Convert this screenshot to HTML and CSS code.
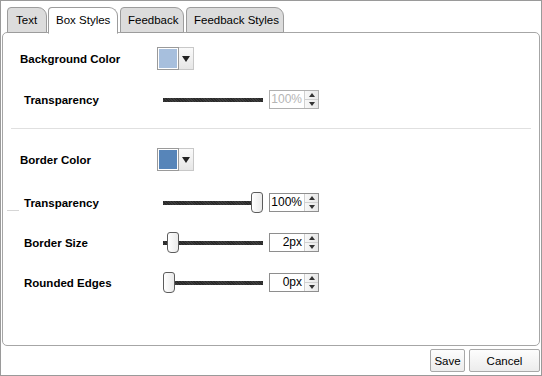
FILE: index.html
```html
<!DOCTYPE html>
<html>
<head>
<meta charset="utf-8">
<link rel="stylesheet" href="styles.css">
</head>
<body>
<div class="window">
  <div class="tabs">
    <div class="tab t-text">Text</div>
    <div class="tab t-box active">Box Styles</div>
    <div class="tab t-fb">Feedback</div>
    <div class="tab t-fbs">Feedback Styles</div>
  </div>
  <div class="panel">
    <div class="row r1">
      <div class="label">Background Color</div>
      <div class="swatch"><span class="fill light"></span><span class="drop"><span class="tri"></span></span></div>
    </div>
    <div class="row r2">
      <div class="label sub">Transparency</div>
      <div class="slider"></div>
      <div class="spin disabled"><span class="val">100%</span><span class="btns"><span class="up"></span><span class="down"></span></span></div>
    </div>
    <div class="sep"></div>
    <div class="row r3">
      <div class="label">Border Color</div>
      <div class="swatch"><span class="fill dark"></span><span class="drop"><span class="tri"></span></span></div>
    </div>
    <div class="row r4">
      <div class="label sub tick">Transparency</div>
      <div class="slider"><span class="thumb" style="left:88px"></span></div>
      <div class="spin"><span class="val">100%</span><span class="btns"><span class="up"></span><span class="down"></span></span></div>
    </div>
    <div class="row r5">
      <div class="label sub">Border Size</div>
      <div class="slider"><span class="thumb" style="left:4px"></span></div>
      <div class="spin"><span class="val">2px</span><span class="btns"><span class="up"></span><span class="down"></span></span></div>
    </div>
    <div class="row r6">
      <div class="label sub">Rounded Edges</div>
      <div class="slider"><span class="thumb" style="left:0px"></span></div>
      <div class="spin"><span class="val">0px</span><span class="btns"><span class="up"></span><span class="down"></span></span></div>
    </div>
  </div>
  <div class="footer">
    <button class="btn save">Save</button>
    <button class="btn cancel">Cancel</button>
  </div>
</div>
</body>
</html>
```

FILE: styles.css
```css
html, body { margin: 0; padding: 0; background: #fff; }
body { font-family: "Liberation Sans", Arial, sans-serif; font-size: 11px; color: #000; }
.window {
  width: 542px; height: 376px; box-sizing: border-box;
  border: 1px solid #9a9a9a; background: #fff;
  display: flex; flex-direction: column;
}
.tabs {
  display: flex; height: 25px; margin-top: 6px; padding-left: 6px; gap: 1px;
  position: relative; z-index: 2;
}
.tab {
  height: 26px; box-sizing: border-box;
  border: 1px solid #9c9c9c;
  border-radius: 4px 9px 0 0;
  background: #dcdcdc;
  padding: 6px 0 0 8px;
  font-size: 11.5px; line-height: 13px; color: #000;
}
.tab.t-text { width: 40px; }
.tab.t-box { width: 70px; padding-left: 7px; }
.tab.t-fb { width: 64px; padding-left: 7px; margin-left: 1px; }
.tab.t-fbs { width: 98px; padding-left: 7px; margin-left: 1px; }
.tab.active { background: #fff; border-bottom-color: #fff; height: 27px; }
.panel {
  margin: 0 1px; height: 314px; box-sizing: border-box;
  border: 1px solid #a6a6a6; border-radius: 5px;
  padding-top: 14px;
  position: relative; z-index: 1;
}
.row { display: flex; align-items: center; height: 21px; margin-top: 19px; }
.row.r1 { margin-top: 0; height: 23px; }
.row.r2 { margin-top: 19px; }
.row.r3 { margin-top: 19px; height: 23px; }
.row.r4 { margin-top: 21px; }
.label {
  width: 154px; box-sizing: border-box; padding-left: 17px;
  font-weight: bold; font-size: 11.5px; position: relative;
}
.label.sub { padding-left: 21px; width: 160px; }
.label.tick::before {
  content: ""; position: absolute; left: 4px; top: 13px; width: 12px; height: 1px; background: #d6d6d6;
}
.sep { margin: 18px 8px 0 8px; height: 1px; background: #e0e0e0; }
.swatch { display: flex; height: 23px; }
.fill {
  width: 22px; height: 23px; box-sizing: border-box;
  border: 1px solid #9a9a9a; box-shadow: inset 0 0 0 1px #fff;
}
.fill.light { background: #a7bfdd; }
.fill.dark { background: #5785b9; }
.drop {
  width: 15px; height: 23px; box-sizing: border-box;
  border: 1px solid #c8c8c8; border-left: none;
  background: linear-gradient(#fafafa, #e6e6e6);
  display: flex; align-items: center; justify-content: center;
}
.tri {
  width: 0; height: 0; border-left: 4px solid transparent; border-right: 4px solid transparent;
  border-top: 6px solid #222;
}
.slider {
  width: 100px; height: 4px; position: relative;
  background: repeating-linear-gradient(45deg, #2a2a2a 0 1px, #3c3c3c 1px 2px);
}
.thumb {
  position: absolute; top: -9px; width: 12px; height: 21px; box-sizing: border-box;
  border: 1px solid #5c5c5c; border-radius: 3px 3px 4px 4px;
  background: linear-gradient(90deg, #ffffff, #eaeaea);
}
.spin {
  margin-left: 6px; display: flex; width: 50px; height: 19px; box-sizing: border-box;
  border: 1px solid #8e8e8e; background: #fff;
}
.spin .val {
  flex: 1; text-align: right; padding-right: 2px; font-size: 12px; line-height: 17px; color: #000;
}
.spin.disabled { border-color: #b0b0b0; }
.spin.disabled .val { color: #b5b5b5; }
.btns {
  width: 13px; display: flex; flex-direction: column; border-left: 1px solid #d0d0d0;
  background: linear-gradient(90deg, #f8f8f8, #e8e8e8);
}
.up, .down { flex: 1; display: flex; align-items: center; justify-content: center; }
.down { border-top: 1px solid #d0d0d0; }
.up::after {
  content: ""; border-left: 3px solid transparent; border-right: 3px solid transparent; border-bottom: 4px solid #333;
}
.down::after {
  content: ""; border-left: 3px solid transparent; border-right: 3px solid transparent; border-top: 4px solid #333;
}
.footer { display: flex; justify-content: flex-end; gap: 4px; margin-top: 3px; padding-right: 1px; }
.btn {
  height: 23px; box-sizing: border-box; margin: 0;
  border: 1px solid #a8a8a8; border-radius: 2px;
  background: linear-gradient(#fdfdfd, #ececec);
  font-family: "Liberation Sans", Arial, sans-serif; font-size: 11.5px; color: #000; padding: 0;
}
.btn.save { width: 35px; }
.btn.cancel { width: 71px; }
```
